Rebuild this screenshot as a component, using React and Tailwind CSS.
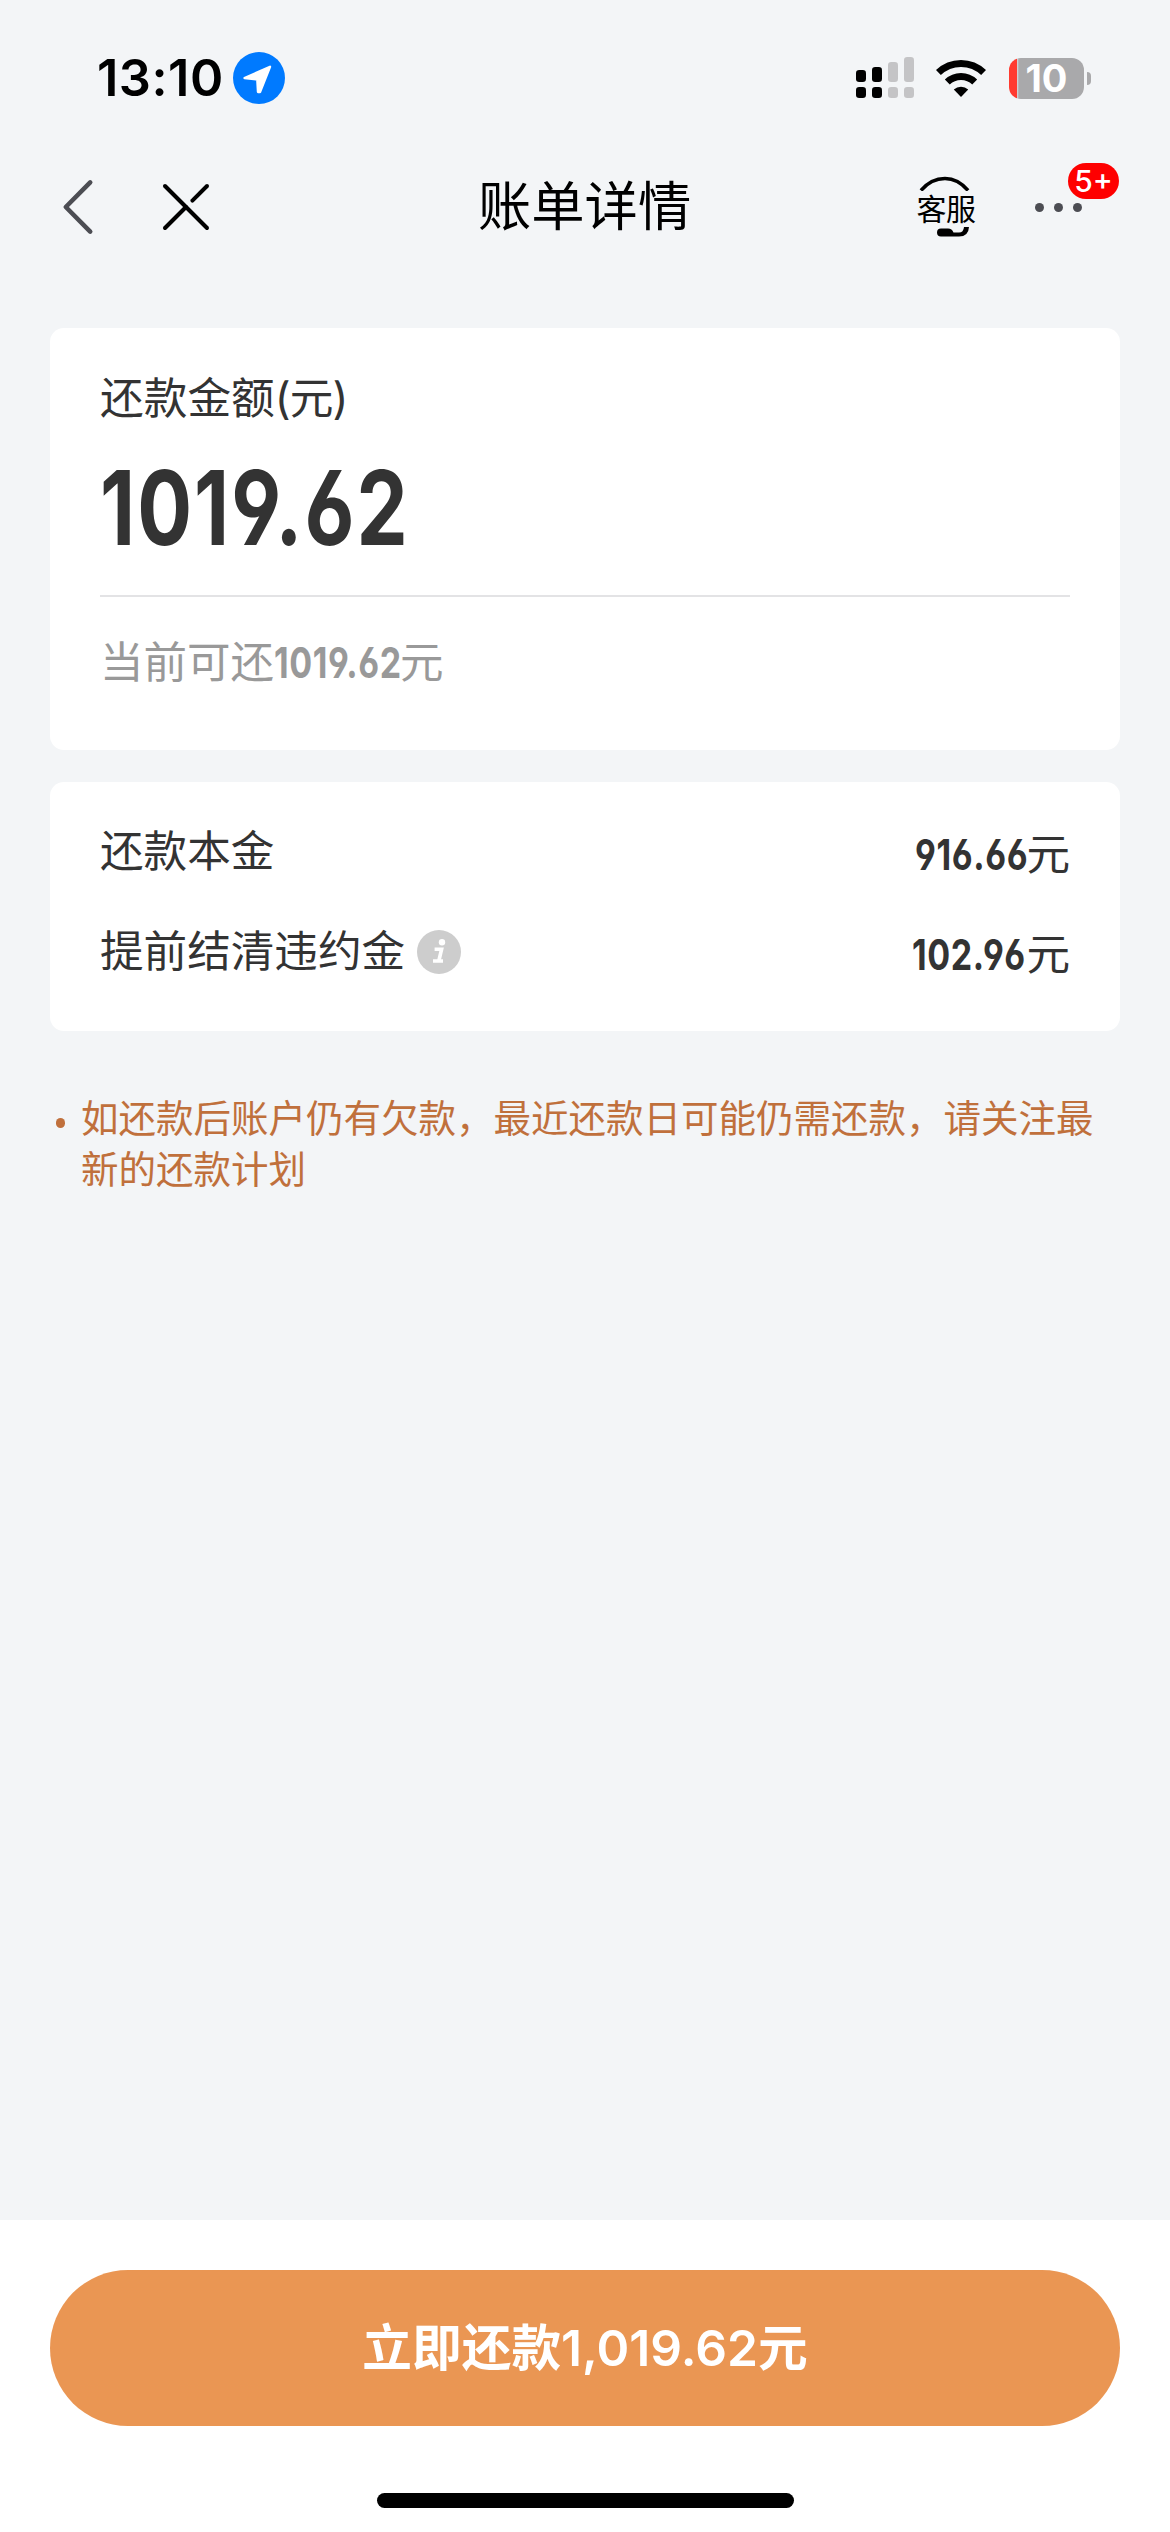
function StatusBar() {
  return (
    <div className="flex h-[156px] items-center pl-[97px] pr-[79px]">
      <span className="w-[136px] whitespace-nowrap text-[50.5px] font-semibold leading-none tracking-[0.5px] text-black">13:10</span>
      <svg className="h-[52px] w-[52px]" viewBox="0 0 52 52">
        <circle cx="26" cy="26" r="26" fill="#007aff" />
        <path d="M11.5 26 L37 14.8 L27 40 L25 40 L24.3 27.5 Z" fill="#fff" stroke="#fff" strokeWidth="2.4" strokeLinejoin="round" />
      </svg>
      <div className="ml-auto flex items-center">
        <svg className="h-[42px] w-[58px]" viewBox="0 0 58 42">
          <g fill="#000">
            <rect x="0" y="13" width="10" height="12" rx="3.2" />
            <rect x="16" y="10" width="10" height="15" rx="3.2" />
            <rect x="0" y="30" width="10" height="11" rx="3.2" />
            <rect x="16" y="30" width="10" height="11" rx="3.2" />
          </g>
          <g fill="#c4c4c6">
            <rect x="32" y="5" width="10" height="20" rx="3.2" />
            <rect x="48" y="0" width="10" height="25" rx="3.2" />
            <rect x="32" y="30" width="10" height="11" rx="3.2" />
            <rect x="48" y="30" width="10" height="11" rx="3.2" />
          </g>
        </svg>
        <svg className="ml-[22px] h-[38px] w-[50px]" viewBox="0 0 50 38">
          <g fill="none" stroke="#000" strokeWidth="7">
            <path d="M2.4 13.6 A32.5 32.5 0 0 1 47.6 13.6" />
            <path d="M11.3 23 A19.6 19.6 0 0 1 38.7 23" />
          </g>
          <path d="M25 38 L17.8 30.6 A10.5 10.5 0 0 1 32.2 30.6 Z" fill="#000" />
        </svg>
        <div className="ml-[23px] flex items-center">
          <div className="flex h-[41px] w-[75px] items-center justify-center rounded-[12px] bg-[linear-gradient(to_right,#ff3b30_8px,#dcdcde_8px,#a9a9ab_10px)]">
            <span className="text-[38px] font-bold leading-[41px] text-white">10</span>
          </div>
          <div className="ml-[3px] h-[13px] w-[4px] rounded-r-full bg-[#a9a9ab]" />
        </div>
      </div>
    </div>
  );
}

function NavBar() {
  return (
    <div className="flex h-[102px] items-center pl-[60px] pr-[50px]">
      <svg className="h-[56px] w-[36px]" viewBox="0 0 36 56" fill="none" stroke="#4c4d53" strokeWidth="4.6" strokeLinecap="round" strokeLinejoin="round">
        <path d="M30.2 3.4 L5.8 28 L30.2 52.6" />
      </svg>
      <svg className="ml-[66px] h-[50px] w-[50px]" viewBox="0 0 50 50" fill="none" stroke="#000" strokeWidth="4" strokeLinecap="round">
        <path d="M3 4 L45 46" />
        <path d="M45 4 L30.4 18.6" />
        <path d="M24 25 L3 46" />
      </svg>
      <h1 className="ml-[266px] w-[214px] whitespace-nowrap text-[53.3px] leading-none text-black">账单详情</h1>
      <div className="ml-[224px] flex h-[62px] w-[60px] flex-col items-center">
        <svg className="h-[15px] w-[60px] shrink-0" viewBox="0 0 60 15" fill="none" stroke="#000" strokeWidth="3.6">
          <path d="M5 14.5 Q15 2.5 29 2.5 Q42 2.5 52 14.5" />
        </svg>
        <span className="my-[1px] h-[34px] whitespace-nowrap text-[30px] leading-[34px] tracking-[-0.4px] text-black">客服</span>
        <svg className="h-[12px] w-[60px] shrink-0" viewBox="0 0 60 12">
          <path d="M25 1.5 H32 Q36 1.5 37.5 5.5 H43 Q47.5 5.5 48 0 H53 Q52.5 9.5 43 9.5 H25 Q21 9.5 21 5.5 Q21 1.5 25 1.5 Z" fill="#000" />
        </svg>
      </div>
      <div className="relative ml-[56px] flex w-[52px] items-center justify-center gap-[10px]">
        <i className="h-[9px] w-[9px] shrink-0 rounded-full bg-[#4c4d53]" />
        <i className="h-[9px] w-[9px] shrink-0 rounded-full bg-[#4c4d53]" />
        <i className="h-[9px] w-[9px] shrink-0 rounded-full bg-[#4c4d53]" />
        <span className="absolute -top-[40px] left-[36px] flex h-[36px] w-[51px] items-center justify-center rounded-full bg-[#fe0000] text-[30px] font-medium leading-none text-white">5+</span>
      </div>
    </div>
  );
}

function Digits({ children, box, size }) {
  return (
    <span className={`inline-block ${box}`}>
      <span className={`inline-block origin-left scale-x-[0.79] whitespace-nowrap font-bold [font-feature-settings:'cv03','cv04','ss01'] ${size}`}>{children}</span>
    </span>
  );
}

function Row({ label, value, box, info }) {
  return (
    <div className="flex h-[100px] items-center justify-between">
      <span className="flex items-center whitespace-nowrap leading-none">
        {label}
        {info && (
          <svg className="ml-[12px] h-[44px] w-[44px]" viewBox="0 0 44 44">
            <circle cx="22" cy="22" r="22" fill="#cdcdcd" />
            <circle cx="25" cy="12.3" r="3.2" fill="#fff" />
            <path d="M17.6 19.2 H24.6 L21.8 31 M16 31 H26" fill="none" stroke="#fff" strokeWidth="3.6" />
          </svg>
        )}
      </span>
      <span className="whitespace-nowrap pt-[6px] leading-none">
        <Digits box={box} size="text-[43px] tracking-[0.8px]">{value}</Digits>元
      </span>
    </div>
  );
}

export default function App() {
  return (
    <div className="flex h-[2532px] w-[1170px] flex-col overflow-hidden bg-[#f3f5f7] text-[#333] font-['Inter','Noto_Sans_CJK_SC',sans-serif]">
      <StatusBar />
      <NavBar />
      <main className="flex flex-1 flex-col px-[50px] pt-[70px]">
        <section className="h-[422px] rounded-[14px] bg-white px-[50px] pt-[39px]">
          <div className="h-[64px] whitespace-nowrap text-[43.7px] leading-[64px]">还款金额<span className="tracking-[-1px]">(元)</span></div>
          <div className="flex h-[166px] items-center border-b-2 border-[#e3e3e5] pb-[11px]">
            <Digits box="w-[310px] leading-none" size="text-[103px] tracking-[2.6px]">1019.62</Digits>
          </div>
          <div className="flex h-[131px] items-center whitespace-nowrap text-[43.5px] leading-none text-[#999]">
            <span>当前可还<Digits box="w-[126px]" size="text-[43px] tracking-[0.8px]">1019.62</Digits>元</span>
          </div>
        </section>
        <section className="mt-[32px] h-[249px] rounded-[14px] bg-white px-[50px] pt-[20px] text-[43.6px]">
          <Row label="还款本金" value="916.66" box="w-[111px]" />
          <Row label="提前结清违约金" value="102.96" box="w-[114px]" info />
        </section>
        <ul className="mt-[62px] text-[37.5px] leading-[51px] text-[#c0703c]">
          <li className="flex">
            <i className="ml-[6px] mt-[25px] h-[10px] w-[9px] shrink-0 rounded-full bg-[#c0703c]" />
            <span className="ml-[16px] w-[1020px]">如还款后账户仍有欠款，最近还款日可能仍需还款，请关注最新的还款计划</span>
          </li>
        </ul>
      </main>
      <footer className="flex h-[312px] flex-col items-center bg-white pt-[50px]">
        <button className="h-[156px] w-[1070px] rounded-full bg-[#ea9653] pt-[2px] text-[49.7px] font-semibold leading-none text-white">立即还款1,019.62元</button>
        <div className="mt-[67px] h-[15px] w-[417px] rounded-full bg-black" />
      </footer>
    </div>
  );
}
